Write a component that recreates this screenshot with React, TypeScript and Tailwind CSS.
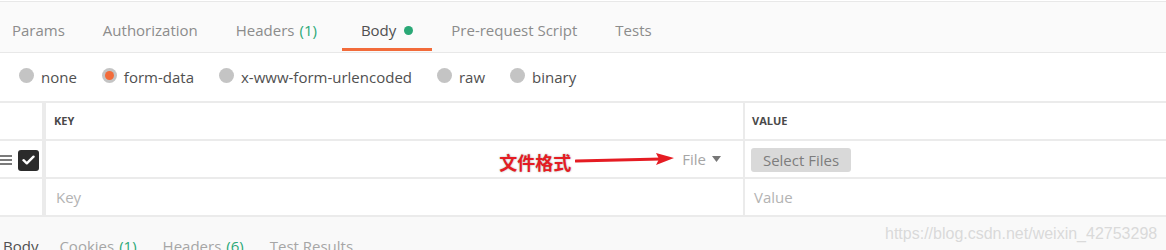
const tabs = [
  { label: "Params" },
  { label: "Authorization" },
  { label: "Headers", count: "(1)" },
  { label: "Body", active: true, dot: true },
  { label: "Pre-request Script" },
  { label: "Tests" },
];

const bodyModes = [
  { label: "none" },
  { label: "form-data", checked: true },
  { label: "x-www-form-urlencoded" },
  { label: "raw" },
  { label: "binary" },
];

const responseTabs = [
  { label: "Body", active: true },
  { label: "Cookies", count: "(1)" },
  { label: "Headers", count: "(6)" },
  { label: "Test Results" },
];

function Radio({ checked }: { checked?: boolean }) {
  return (
    <span className="flex h-[15px] w-[15px] -translate-y-[2px] items-center justify-center rounded-full bg-[#c4c4c4]">
      {checked && <span className="h-[9px] w-[9px] rounded-full bg-[#f26b3a]" />}
    </span>
  );
}

function Arrow() {
  return (
    <svg width="100" height="14" viewBox="0 0 100 14" className="mx-[4px]">
      <line x1="1" y1="9" x2="86" y2="7" stroke="#e51c23" strokeWidth="3" strokeLinecap="round" />
      <polygon points="99,6 81,1 84,7 81,13" fill="#e51c23" />
    </svg>
  );
}

export default function App() {
  return (
    <div
      className="relative h-[250px] w-[1166px] overflow-hidden bg-white"
      style={{ fontFamily: "'Open Sans', 'Noto Sans', sans-serif" }}
    >
      {/* request tabs */}
      <div className="mt-px flex h-[52px] border-y border-[#e8e8e8] bg-[#fafafa]">
        <div className="-ml-[7px] flex">
          {tabs.map((t) => (
            <div
              key={t.label}
              className={`flex items-center px-[19px] pt-[10px] text-[15px] ${
                t.active
                  ? "mb-px ml-[6px] border-b-[3px] border-[#f26b3a] text-[#505050]"
                  : "border-b-[3px] border-transparent text-[#8c8c8c]"
              }`}
            >
              <span>{t.label}</span>
              {t.count && <span className="ml-[5px] text-[#2aa876]">{t.count}</span>}
              {t.dot && <span className="ml-[8px] h-[9px] w-[9px] rounded-full bg-[#2aa876]" />}
            </div>
          ))}
        </div>
      </div>

      {/* body modes */}
      <div className="flex h-[48px] items-center gap-[25px] pl-[19px] pt-[1px]">
        {bodyModes.map((m) => (
          <label key={m.label} className="flex items-center gap-[7px] text-[15px] text-[#505050]">
            <Radio checked={m.checked} />
            <span>{m.label}</span>
          </label>
        ))}
      </div>

      {/* form-data table */}
      <div className="border-t-2 border-[#ebebeb]">
        <div className="grid h-[38px] grid-cols-[42px_4px_697px_2px_1fr] border-b-2 border-[#ebebeb]">
          <div />
          <div className="bg-[#ebebeb]" />
          <div className="flex items-center pl-[8px] text-[11px] font-bold text-[#4a4a4a]">KEY</div>
          <div className="bg-[#ebebeb]" />
          <div className="flex items-center pl-[7px] text-[11px] font-bold text-[#4a4a4a]">VALUE</div>
        </div>

        <div className="grid h-[38px] grid-cols-[42px_4px_697px_2px_1fr] border-b-2 border-[#ebebeb]">
          <div className="flex items-center gap-[6px] pt-[2px]">
            <div className="flex w-[12px] flex-col gap-[2px]">
              <span className="h-[2px] bg-[#7a7a7a]" />
              <span className="h-[2px] bg-[#7a7a7a]" />
              <span className="h-[2px] bg-[#7a7a7a]" />
            </div>
            <div className="flex h-[21px] w-[21px] items-center justify-center rounded-[3px] bg-[#2b2b2b]">
              <svg width="13" height="10" viewBox="0 0 13 10">
                <path d="M1.5 5.2 L4.8 8.3 L11.5 1.7" fill="none" stroke="#fff" strokeWidth="2.4" strokeLinecap="round" strokeLinejoin="round" />
              </svg>
            </div>
          </div>
          <div className="bg-[#ebebeb]" />
          <div className="flex items-center justify-end pr-[22px]">
            <span
              className="translate-y-[3px] text-[18px] font-bold text-[#e51c23]"
              style={{
                fontFamily: "'Noto Sans CJK SC', sans-serif",
                WebkitTextStroke: "3px #fff",
                paintOrder: "stroke fill",
                textShadow: "0 0 2px rgba(0,0,0,0.35)",
              }}
            >
              文件格式
            </span>
            <Arrow />
            <span className="ml-[3px] text-[15px] text-[#a6a6a6]">File</span>
            <svg width="9" height="6" viewBox="0 0 9 6" className="ml-[6px]">
              <polygon points="0,0 9,0 4.5,6" fill="#777" />
            </svg>
          </div>
          <div className="bg-[#ebebeb]" />
          <div className="flex items-center pl-[6px] pt-[2px]">
            <button className="h-[24px] w-[100px] rounded-[3px] bg-[#d9d9d9] text-[15px] text-[#7d7d7d]">
              Select Files
            </button>
          </div>
        </div>

        <div className="grid h-[38px] grid-cols-[42px_4px_697px_2px_1fr] border-b-2 border-[#ebebeb]">
          <div />
          <div className="bg-[#ebebeb]" />
          <div className="flex items-center pl-[10px] text-[15px] text-[#b3b3b3]">Key</div>
          <div className="bg-[#ebebeb]" />
          <div className="flex items-center pl-[9px] text-[15px] text-[#b3b3b3]">Value</div>
        </div>
      </div>

      {/* response tabs */}
      <div className="flex h-[40px] gap-[26px] bg-[#f9f9f9] pl-[3px] pt-[19px]">
        {responseTabs.map((t) => (
          <div
            key={t.label}
            className={`text-[15px] leading-[20px] ${t.active ? "mr-[-5px] text-[#505050]" : "text-[#a6a6a6]"}`}
          >
            {t.label}
            {t.count && <span className="ml-[5px] text-[#2aa876]">{t.count}</span>}
          </div>
        ))}
      </div>

      <div
        className="absolute left-[885px] top-[222px] text-[16px] text-[#dadada]"
        style={{ fontFamily: "'Liberation Sans', Arial, sans-serif" }}
      >
        https://blog.csdn.net/weixin_42753298
      </div>
    </div>
  );
}
